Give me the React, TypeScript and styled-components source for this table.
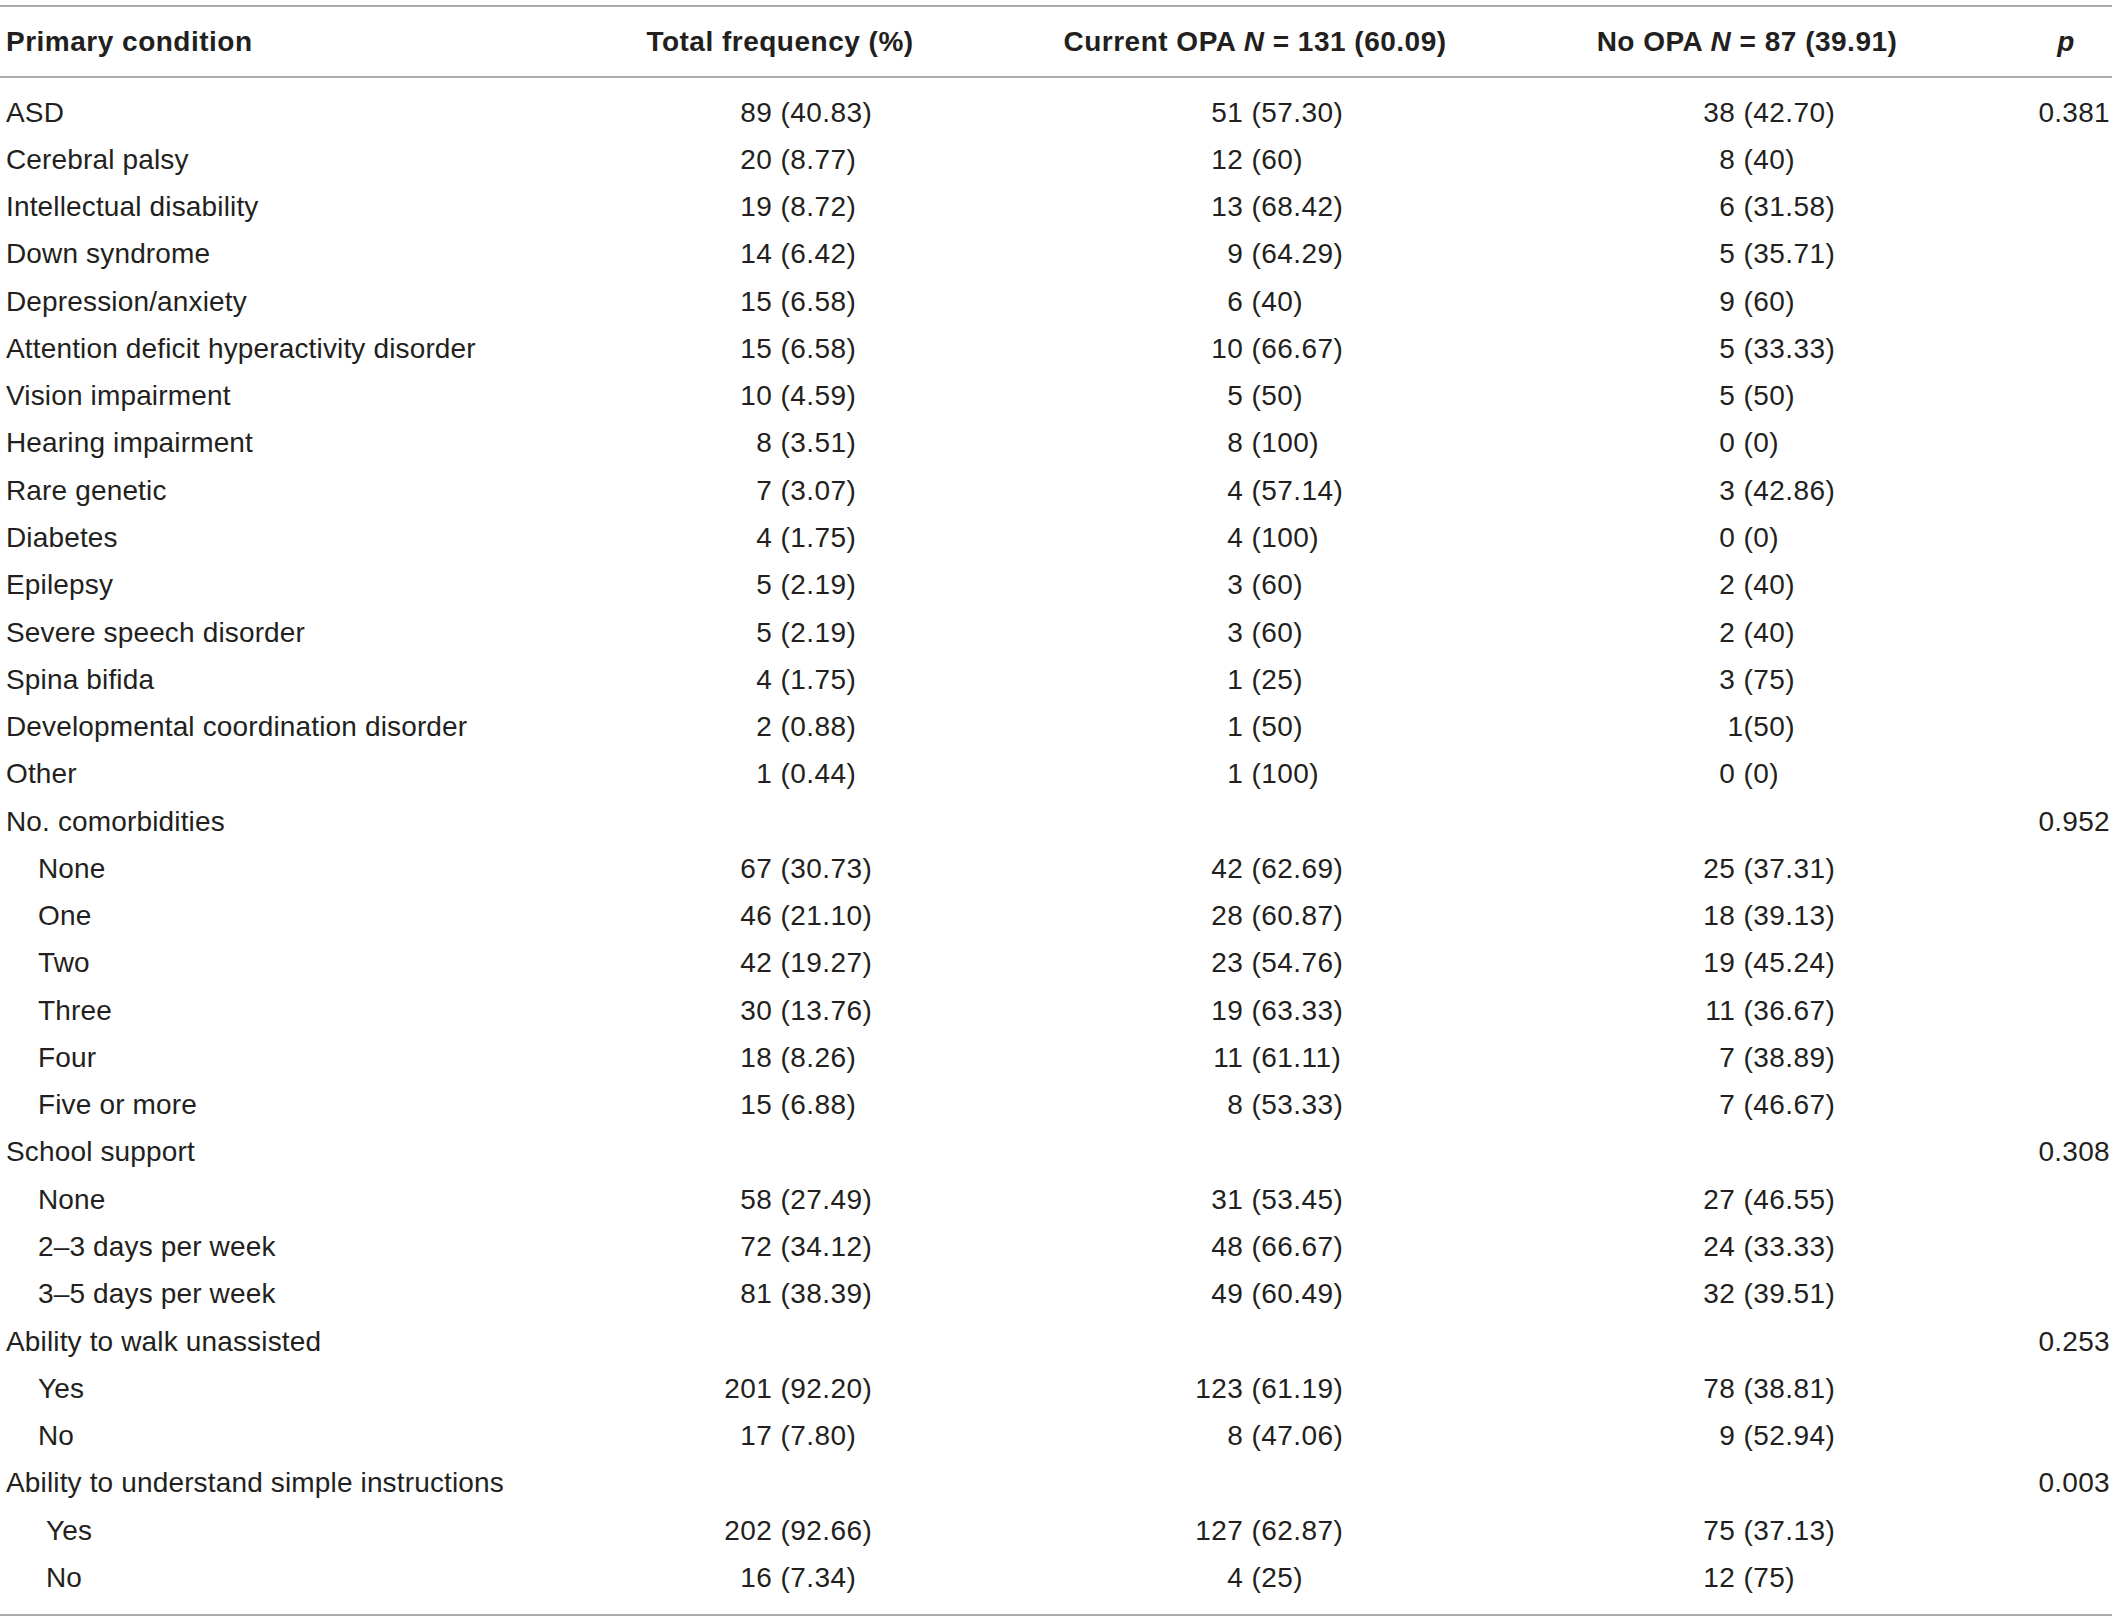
import React from "react";
import styled, { createGlobalStyle } from "styled-components";

const Global = createGlobalStyle`
  html, body { margin: 0; padding: 0; background: #ffffff; }
  body { font-family: "Liberation Sans", Arial, Helvetica, sans-serif; color: #231f20; }
`;

const COLS = "540px 476px 466px 518px 112px";

const Page = styled.div`
  padding-top: 5px;
  width: 2112px;
`;

const Table = styled.div`
  border-top: 2px solid #a9abae;
  border-bottom: 2px solid #a9abae;
  width: 2112px;
`;

const Head = styled.div`
  display: grid;
  grid-template-columns: ${COLS};
  height: 69px;
  align-items: center;
  border-bottom: 2px solid #a9abae;
  font-weight: 700;
  font-size: 28px;
`;

const HeadCell = styled.div<{ $align?: "left" | "center" | "right"; $shift?: number }>`
  text-align: ${(p) => p.$align || "center"};
  padding-left: ${(p) => (p.$align === "left" ? 6 : 0)}px;
  transform: translateX(${(p) => p.$shift || 0}px);
  white-space: nowrap;
  letter-spacing: 0.5px;
`;

const Body = styled.div`
  padding: 11px 0 12px;
`;

const Row = styled.div`
  display: grid;
  grid-template-columns: ${COLS};
  height: 47.28px;
  align-items: center;
  font-size: 28px;
`;

const Label = styled.div<{ $indent: number }>`
  padding-left: ${(p) => p.$indent}px;
  white-space: nowrap;
  letter-spacing: 0.15px;
`;

const Split = styled.div`
  display: grid;
  grid-template-columns: 1fr 1fr;
  padding-left: 5px;
  white-space: pre;
  letter-spacing: 0.45px;
`;

const Count = styled.span`
  text-align: right;
`;

const Pct = styled.span`
  text-align: left;
`;

const PVal = styled.div`
  text-align: right;
  padding-right: 2px;
  letter-spacing: 0.3px;
`;

type R = { label: string; indent?: number; v?: [string, string, string]; p?: string };

const rows: R[] = [
  { label: "ASD", v: ["89 (40.83)", "51 (57.30)", "38 (42.70)"], p: "0.381" },
  { label: "Cerebral palsy", v: ["20 (8.77)", "12 (60)", "8 (40)"] },
  { label: "Intellectual disability", v: ["19 (8.72)", "13 (68.42)", "6 (31.58)"] },
  { label: "Down syndrome", v: ["14 (6.42)", "9 (64.29)", "5 (35.71)"] },
  { label: "Depression/anxiety", v: ["15 (6.58)", "6 (40)", "9 (60)"] },
  { label: "Attention deficit hyperactivity disorder", v: ["15 (6.58)", "10 (66.67)", "5 (33.33)"] },
  { label: "Vision impairment", v: ["10 (4.59)", "5 (50)", "5 (50)"] },
  { label: "Hearing impairment", v: ["8 (3.51)", "8 (100)", "0 (0)"] },
  { label: "Rare genetic", v: ["7 (3.07)", "4 (57.14)", "3 (42.86)"] },
  { label: "Diabetes", v: ["4 (1.75)", "4 (100)", "0 (0)"] },
  { label: "Epilepsy", v: ["5 (2.19)", "3 (60)", "2 (40)"] },
  { label: "Severe speech disorder", v: ["5 (2.19)", "3 (60)", "2 (40)"] },
  { label: "Spina bifida", v: ["4 (1.75)", "1 (25)", "3 (75)"] },
  { label: "Developmental coordination disorder", v: ["2 (0.88)", "1 (50)", "1(50)"] },
  { label: "Other", v: ["1 (0.44)", "1 (100)", "0 (0)"] },
  { label: "No. comorbidities", p: "0.952" },
  { label: "None", indent: 1, v: ["67 (30.73)", "42 (62.69)", "25 (37.31)"] },
  { label: "One", indent: 1, v: ["46 (21.10)", "28 (60.87)", "18 (39.13)"] },
  { label: "Two", indent: 1, v: ["42 (19.27)", "23 (54.76)", "19 (45.24)"] },
  { label: "Three", indent: 1, v: ["30 (13.76)", "19 (63.33)", "11 (36.67)"] },
  { label: "Four", indent: 1, v: ["18 (8.26)", "11 (61.11)", "7 (38.89)"] },
  { label: "Five or more", indent: 1, v: ["15 (6.88)", "8 (53.33)", "7 (46.67)"] },
  { label: "School support", p: "0.308" },
  { label: "None", indent: 1, v: ["58 (27.49)", "31 (53.45)", "27 (46.55)"] },
  { label: "2–3 days per week", indent: 1, v: ["72 (34.12)", "48 (66.67)", "24 (33.33)"] },
  { label: "3–5 days per week", indent: 1, v: ["81 (38.39)", "49 (60.49)", "32 (39.51)"] },
  { label: "Ability to walk unassisted", p: "0.253" },
  { label: "Yes", indent: 1, v: ["201 (92.20)", "123 (61.19)", "78 (38.81)"] },
  { label: "No", indent: 1, v: ["17 (7.80)", "8 (47.06)", "9 (52.94)"] },
  { label: "Ability to understand simple instructions", p: "0.003" },
  { label: "Yes", indent: 2, v: ["202 (92.66)", "127 (62.87)", "75 (37.13)"] },
  { label: "No", indent: 2, v: ["16 (7.34)", "4 (25)", "12 (75)"] },
];

function Cell({ text }: { text: string }) {
  const i = text.indexOf("(");
  return (
    <Split>
      <Count>{text.slice(0, i)}</Count>
      <Pct>{text.slice(i)}</Pct>
    </Split>
  );
}

const indentPx = [6, 38, 46];

export default function App() {
  return (
    <>
      <Global />
      <Page>
        <Table>
          <Head>
            <HeadCell $align="left">Primary condition</HeadCell>
            <HeadCell $shift={2}>Total frequency (%)</HeadCell>
            <HeadCell $shift={6}>
              Current OPA <i>N</i> = 131 (60.09)
            </HeadCell>
            <HeadCell $shift={6}>
              No OPA <i>N</i> = 87 (39.91)
            </HeadCell>
            <HeadCell $shift={10}>
              <i>p</i>
            </HeadCell>
          </Head>
          <Body>
            {rows.map((r, k) => (
              <Row key={k}>
                <Label $indent={indentPx[r.indent || 0]}>{r.label}</Label>
                {r.v ? <Cell text={r.v[0]} /> : <div />}
                {r.v ? <Cell text={r.v[1]} /> : <div />}
                {r.v ? <Cell text={r.v[2]} /> : <div />}
                <PVal>{r.p || ""}</PVal>
              </Row>
            ))}
          </Body>
        </Table>
      </Page>
    </>
  );
}
